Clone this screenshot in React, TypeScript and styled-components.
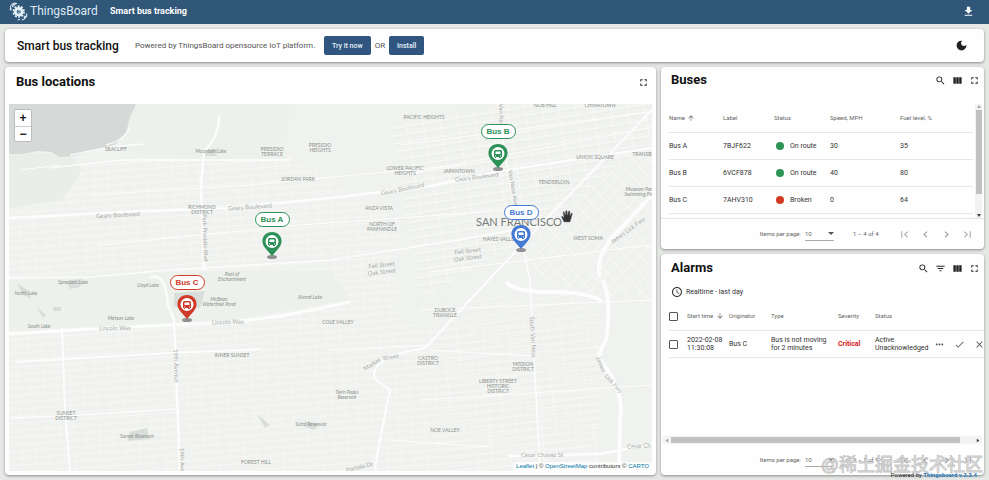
import React from "react";
import styled, { createGlobalStyle, css } from "styled-components";
import {
  MdSearch, MdViewColumn, MdFullscreen, MdFilterList, MdFileDownload, MdFirstPage, MdLastPage,
  MdChevronLeft, MdChevronRight, MdMoreHoriz, MdDone, MdClose, MdSchedule, MdArrowUpward,
  MdArrowDownward, MdDarkMode,
} from "react-icons/md";

const GlobalStyle = createGlobalStyle`
  * { box-sizing: border-box; }
  body { margin: 0; background: #e6e8e6; font-family: Roboto, "Noto Sans CJK SC", sans-serif; color: #222; }
  button, select, input { font: inherit; color: inherit; margin: 0; }
  h1, h2, h3, p { margin: 0; }
`;

const Page = styled.div`
  display: flex;
  flex-direction: column;
  min-height: 100vh;
  overflow: hidden;
`;
const TopBar = styled.header`
  display: flex;
  align-items: center;
  height: 24px;
  padding: 0 14px 2px 9px;
  background: #305678;
  color: #fff;
`;
const Brand = styled.a`
  display: flex;
  align-items: center;
  gap: 2px;
  width: 101px;
  color: #dcebf7;
  font-size: 12px;
  line-height: 16px;
  text-decoration: none;
`;
const PageTitle = styled.h1`
  flex: 1;
  font-size: 9px;
  font-weight: 700;
  line-height: 12px;
`;
const IconButton = styled.button<{ $size?: number; $color?: string }>`
  display: flex;
  align-items: center;
  justify-content: center;
  flex: none;
  width: ${(p) => p.$size ?? 11}px;
  height: ${(p) => p.$size ?? 11}px;
  padding: 0;
  border: 0;
  background: none;
  color: ${(p) => p.$color ?? "#222"};
  font-size: ${(p) => p.$size ?? 11}px;
`;
const Dashboard = styled.main`
  flex: 1;
  display: grid;
  grid-template-columns: minmax(0, 651fr) minmax(0, 323fr);
  grid-template-rows: auto 1fr;
  gap: 5px;
  padding: 5px;
`;
const card = css`
  background: #fefefe;
  border-radius: 4px;
  box-shadow: 0 1px 3px rgba(0, 0, 0, 0.4);
`;
const Intro = styled.section`
  ${card}
  grid-column: 1 / -1;
  display: flex;
  align-items: center;
  height: 33px;
  padding: 0 16px 0 12px;
`;
const IntroTitle = styled.h2`
  min-width: 118px;
  font-size: 12px;
  font-weight: 500;
  line-height: 16px;
  color: #111;
`;
const IntroText = styled.p<{ $min?: number }>`
  min-width: ${(p) => p.$min ?? 0}px;
  font-size: 8px;
  line-height: 12px;
  color: #555;
`;
const ActionButton = styled.button`
  height: 19px;
  margin: 0 4px;
  padding: 0 8px;
  border: 0;
  border-radius: 2px;
  background: #305680;
  color: #e8f1f8;
  font-size: 7px;
  font-weight: 500;
`;
const Grow = styled.div`
  flex: 1;
`;
const MapCard = styled.section`
  ${card}
  display: flex;
  flex-direction: column;
  padding: 0 4px 4px;
`;
const RightColumn = styled.div`
  display: flex;
  flex-direction: column;
  gap: 5px;
  min-width: 0;
`;
const Panel = styled.section<{ $grow?: boolean }>`
  ${card}
  display: flex;
  flex-direction: column;
  flex: ${(p) => (p.$grow ? "1" : "none")};
  overflow: hidden;
`;
const PanelHead = styled.div<{ $height: number; $pad: string }>`
  display: flex;
  align-items: center;
  gap: 6px;
  flex: none;
  height: ${(p) => p.$height}px;
  padding: ${(p) => p.$pad};
`;
const PanelTitle = styled.h2`
  flex: 1;
  font-size: 13px;
  font-weight: 700;
  line-height: 16px;
  color: #111;
`;
const MapArea = styled.div`
  position: relative;
  flex: 1;
  min-height: 367px;
  overflow: hidden;
  background: #f0f2ef;
`;
const MapDrawing = styled.svg`
  position: absolute;
  inset: 0;
  width: 100%;
  height: 100%;
`;
const ZoomBox = styled.div`
  position: absolute;
  left: 5px;
  top: 5px;
  width: 18px;
  border: 1px solid #bbbdbb;
  border-radius: 2px;
  background: #fff;
`;
const ZoomButton = styled.button`
  display: block;
  width: 16px;
  height: 16px;
  padding: 0;
  border: 0;
  background: none;
  color: #111;
  font: 700 12px/16px "Liberation Sans", sans-serif;
  & + & { height: 15px; border-top: 1px solid #ccc; line-height: 14px; }
`;
const Marker = styled.div<{ $x: number; $y: number; $color: string }>`
  position: absolute;
  left: ${(p) => p.$x}px;
  top: ${(p) => p.$y}px;
  width: 36px;
  display: flex;
  flex-direction: column;
  align-items: center;
  gap: 4px;
  color: ${(p) => p.$color};
`;
const MarkerLabel = styled.span`
  width: 35px;
  height: 15px;
  border: 1px solid currentColor;
  border-radius: 8px;
  background: #fff;
  text-align: center;
  font: 700 8px/13px "Liberation Sans", sans-serif;
`;
const Attribution = styled.div`
  position: absolute;
  right: 0;
  bottom: 0;
  padding: 0 3px;
  background: rgba(255, 255, 255, 0.7);
  font: 6px/9px "Liberation Sans", sans-serif;
  color: #333;
  a { color: #0078a8; text-decoration: none; }
`;
const HandCursor = styled.svg`
  position: absolute;
  left: 552px;
  top: 106px;
`;
const TableArea = styled.div<{ $grow?: boolean }>`
  display: flex;
  flex: ${(p) => (p.$grow ? "1" : "none")};
  align-items: stretch;
  min-height: 114px;
  overflow: hidden;
`;
const Table = styled.table`
  flex: 1;
  align-self: flex-start;
  min-width: 0;
  width: 100%;
  margin-left: 8px;
  table-layout: fixed;
  border-collapse: separate;
  border-spacing: 0;
  font-size: 7px;
  line-height: 8px;
  color: #333;
`;
const Th = styled.th<{ $w?: number }>`
  width: ${(p) => (p.$w ? `${p.$w}px` : "auto")};
  height: 29px;
  padding: 0;
  border-bottom: 1px solid #e6e6e6;
  text-align: left;
  font-size: 6px;
  font-weight: 400;
  white-space: nowrap;
  color: #666;
  svg { vertical-align: -2px; margin-left: 1px; }
`;
const Td = styled.td`
  height: 27px;
  padding: 0;
  border-bottom: 1px solid #e6e6e6;
`;
const StatusCell = styled.span<{ $color: string }>`
  display: flex;
  align-items: center;
  gap: 6px;
  padding-left: 2px;
  &::before {
    content: "";
    width: 8px;
    height: 8px;
    border-radius: 50%;
    background: ${(p) => p.$color};
  }
`;
const Critical = styled.strong`
  color: #d92020;
`;
const Nowrap = styled.span`
  white-space: nowrap;
`;
const Actions = styled.div`
  display: flex;
  gap: 9px;
`;
const ScrollTrack = styled.div<{ $horizontal?: boolean }>`
  display: flex;
  flex-direction: ${(p) => (p.$horizontal ? "row" : "column")};
  align-items: center;
  flex: none;
  gap: 2px;
  ${(p) => (p.$horizontal
    ? "height: 8px; margin: 0 2px; padding: 0 2px;"
    : "width: 7px; margin: 0 2px; padding: 1px 0;")}
  background: #f3f3f3;
`;
const ScrollThumb = styled.div<{ $share: number; $horizontal?: boolean }>`
  flex: ${(p) => p.$share};
  background: #c1c1c1;
  ${(p) => (p.$horizontal ? "height: 6px;" : "width: 6px;")}
`;
const ScrollRest = styled.div<{ $share: number }>`
  flex: ${(p) => p.$share};
`;
const Caret = styled.svg<{ $turn?: number }>`
  flex: none;
  width: 4px;
  height: 3px;
  transform: rotate(${(p) => p.$turn ?? 0}deg);
`;
const Paginator = styled.div<{ $line?: boolean }>`
  display: flex;
  align-items: center;
  justify-content: flex-end;
  flex: none;
  height: 31px;
  padding-right: 10px;
  border-top: 1px solid ${(p) => (p.$line ? "#e6e6e6" : "transparent")};
  font-size: 6px;
  line-height: 8px;
  color: #666;
`;
const PageSize = styled.label`
  display: flex;
  align-items: center;
  gap: 4px;
`;
const SelectWrap = styled.span`
  display: flex;
  align-items: center;
  width: 29px;
  height: 14px;
  border-bottom: 1px solid #aaa;
  color: #666;
`;
const Select = styled.select`
  flex: 1;
  min-width: 0;
  padding: 0;
  border: 0;
  appearance: none;
  background: none;
`;
const Range = styled.span`
  width: 45px;
  margin: 0 0 0 19px;
`;
const PageButtons = styled.div`
  display: flex;
  gap: 8px;
`;
const TimeWindow = styled.button`
  display: flex;
  align-items: center;
  gap: 3px;
  align-self: flex-start;
  height: 20px;
  margin-left: 10px;
  padding: 0;
  border: 0;
  background: none;
  font-size: 7px;
  color: #333;
`;
const Checkbox = styled.input`
  display: block;
  appearance: none;
  width: 9px;
  height: 9px;
  border: 1px solid #555;
  border-radius: 1px;
`;
const PoweredBy = styled.footer`
  position: absolute;
  right: 12px;
  bottom: 1px;
  font-size: 6px;
  line-height: 9px;
  color: #222;
  a { color: #2a75b5; font-weight: 700; text-decoration: none; }
`;
const Watermark = styled.div`
  position: absolute;
  right: 6px;
  bottom: 2px;
  font-size: 18px;
  line-height: 26px;
  font-family: "Liberation Sans", "Noto Sans CJK SC", sans-serif;
  white-space: nowrap;
  color: rgba(255, 255, 255, 0.9);
  -webkit-text-stroke: 1px rgba(110, 110, 110, 0.4);
  pointer-events: none;
`;
const Shell = styled.div`
  position: relative;
`;

const Logo = () => (
  <svg width="19" height="19" viewBox="0 0 57 57" fill="none" stroke="#e8f3fa" strokeWidth="3" aria-hidden="true">
    <circle cx="29" cy="29" r="10" strokeWidth="8" />
    <circle cx="29" cy="29" r="16" strokeWidth="5" strokeDasharray="6 4.050" />
    <path d="M26 27l7-2M27 32l6-2" strokeWidth="2" />
    <path d="M5 22V10M11 14l-3-8h10M17 3l7 2M16 11l-6 3M38 54l9-3 1-8M53 34v10l-6 4M33 52l-7 2" />
    <circle cx="16" cy="6" r="3" /><circle cx="5" cy="22" r="2" /><circle cx="48" cy="45" r="3" />
  </svg>
);

const Place = ({ x, y, lines, size = 5 }: { x: number; y: number; lines: string[]; size?: number }) => (
  <text x={x} y={y} fontSize={size} textAnchor="middle" fill="#8a8f8c">
    {lines.map((l, i) => <tspan key={l} x={x} dy={i ? size : 0}>{l}</tspan>)}
  </text>
);

const places: [number, number, string[]][] = [
  [116, 151, ["SEACLIFF"]], [272, 151, ["PRESIDIO", "TERRACE"]], [320, 147, ["PRESIDIO", "HEIGHTS"]],
  [298, 181, ["JORDAN PARK"]], [202, 209, ["RICHMOND", "DISTRICT"]], [424, 119, ["PACIFIC HEIGHTS"]],
  [545, 107, ["NOB HILL"]], [600, 107, ["CHINATOWN"]], [595, 159, ["UNION SQUARE"]], [405, 170, ["LOWER PACIFIC", "HEIGHTS"]],
  [459, 173, ["JAPANTOWN"]], [554, 184, ["TENDERLOIN"]], [379, 210, ["ANZA VISTA"]], [382, 226, ["NORTH OF", "PANHANDLE"]],
  [500, 241, ["HAYES VALLEY"]], [588, 240, ["WEST SOMA"]], [445, 312, ["DUBOCE", "TRIANGLE"]], [338, 324, ["COLE VALLEY"]],
  [428, 360, ["CASTRO", "DISTRICT"]], [523, 366, ["MISSION", "DISTRICT"]], [498, 383, ["LIBERTY STREET", "HISTORIC", "DISTRICT"]],
  [445, 432, ["NOE VALLEY"]], [232, 357, ["INNER SUNSET"]], [66, 415, ["SUNSET", "DISTRICT"]], [256, 464, ["FOREST HILL"]],
  [645, 156, ["TRANSBAY"]],
];
const waters: [number, number, string[]][] = [
  [211, 153, ["Mountain Lake"]], [73, 284, ["Spreckels Lake"]], [26, 295, ["North Lake"]], [148, 287, ["Lloyd Lake"]],
  [232, 276, ["Pool of", "Enchantment"]], [219, 301, ["McBean", "Waterfowl Pond"]], [310, 299, ["Alvord Lake"]],
  [121, 320, ["Metson Lake"]], [39, 328, ["South Lake"]], [137, 438, ["Sunset Reservoir"]], [347, 394, ["Twin Peaks", "Reservoir"]],
  [311, 426, ["Sutro Reservoir"]], [640, 191, ["Museum Park", "Swimming Pool"]],
];
const streets: [number, number, number, string][] = [
  [118, 217, -3, "Geary Boulevard"], [250, 209, -4, "Geary Boulevard"], [403, 191, -11, "Geary Boulevard"], [477, 179, -7, "Geary Boulevard"],
  [115, 330, -1, "Lincoln Way"], [228, 324, -2, "Lincoln Way"], [382, 267, -7, "Fell Street"], [382, 274, -7, "Oak Street"],
  [468, 253, -7, "Fell Street"], [468, 260, -7, "Oak Street"], [542, 457, 0, "Cesar Chavez St"], [639, 448, -4, "Cesar Ch"],
  [203, 238, 88, "Park Presidio Blvd"], [174, 366, 88, "19th Avenue"], [180, 460, 88, "19th Ave"], [511, 188, 80, "Van Ness Ave"],
  [531, 337, 87, "South Van Ness"], [499, 116, 88, "Van Ness"], [373, 366, -32, "Market"], [391, 359, -9, "Street"],
  [599, 365, 68, "James"], [612, 385, 50, "Lick Fwy"], [629, 232, -36, "James Lick Fwy"], [360, 469, -14, "Portola Dr"],
];
const roads: [string, number][] = [
  ["M9 218L120 212L230 208L330 198L430 186L500 171L652 148", 2.4],
  ["M9 278L90 277L170 270L330 260L460 240L540 225", 1.5],
  ["M9 334L110 328L230 322L282 316L350 302", 3],
  ["M15 362L170 353L262 349", 2], ["M10 418L64 416L175 409", 1.5],
  ["M219 115Q220 135 204 152L201 185L204 270", 2.6], ["M150 278Q165 270 168 305L174 320L180 471", 2.4],
  ["M62 328L65 410L70 471", 2], ["M498 104L510 185L530 280L540 471", 1.5],
  ["M375 470L378 450L390 390L374 378Q372 360 405 352L425 348L545 220L652 110", 2],
  ["M506 282Q515 293 560 292Q595 294 602 302M603 280Q612 300 606 340Q597 355 600 360Q625 390 620 420L619 471M600 277Q595 260 610 240L652 195", 4],
  ["M508 456L600 454L652 444", 2.5], ["M330 350L425 345M430 350L530 356M390 440L490 447", 1.2],
  ["M106 145Q122 142 130 128M70 155L110 147L145 144M50 168L120 160L290 160", 1.4],
  ["M20 170L60 165M90 195L250 185L460 165M100 245L300 225L510 210", 1],
  ["M400 175L650 128M400 145L650 112M430 272L650 245M420 310L652 300M420 400L652 385", 1],
];

const BusMap = () => (
  <MapDrawing viewBox="9 104 643 367" preserveAspectRatio="xMinYMin slice" fontFamily="Lato, sans-serif" aria-label="Map of San Francisco">
    <defs>
      <pattern id="avenues" width="13" height="7" patternUnits="userSpaceOnUse" patternTransform="rotate(-4)">
        <path d="M0 3.500H13M4 0V7" stroke="#f6f7f5" strokeWidth="1" /><path d="M0 0H13" stroke="#eceeec" strokeWidth="0.600" />
      </pattern>
      <pattern id="downtown" width="17" height="8" patternUnits="userSpaceOnUse" patternTransform="rotate(-9)">
        <path d="M0 4H17M8 0V8" stroke="#f9faf8" strokeWidth="0.900" /><path d="M0 6H17" stroke="#e8eae7" strokeWidth="0.600" />
      </pattern>
      <pattern id="soma" width="12" height="9" patternUnits="userSpaceOnUse" patternTransform="rotate(-43)">
        <path d="M0 4H12M6 0V9" stroke="#f9faf8" strokeWidth="1" /><path d="M0 5H12" stroke="#e7e9e6" strokeWidth="0.600" />
      </pattern>
    </defs>
    <path fill="#f0f2ef" d="M9 104H652V471H9z" />
    <path fill="url(#avenues)" d="M50 165L290 155L400 220L390 471H9V220zM9 325H600V471H9z" />
    <path fill="url(#downtown)" d="M390 125L500 104H652V140L540 230L420 300z" />
    <path fill="url(#soma)" d="M652 140V300L560 290L520 260L545 225z" />
    <path fill="url(#downtown)" d="M430 300L610 290L600 471H450z" opacity=".6" />
    <path fill="#e9eee8" d="M9 155L40 153L70 155L82 170L62 200L9 208z" />
    <path fill="#edf1ec" d="M132 104H290L285 158L205 160L120 151zM9 280L150 272L330 270L350 300L230 320L9 331z" />
    <path fill="#d5dad8" d="M9 104H136L130 117L126 133L116 144L106 148L94 150L84 153L72 156L60 157L51 152L38 151L22 154L9 154z" />
    <g fill="#dadedb"><path d="M174 293L205 291L200 308L174 307zM17 283L29 291L31 299L22 294zM36 306L46 315L43 318zM53 307h8v4h-8zM66 281L82 279L80 287L70 289zM130 432L147 428L149 439L127 441zM257 414L270 425L265 428zM305 421L320 424L314 430L305 427zM205 150L219 148L216 156L205 156z" /></g>
    <g fill="none" stroke="#fff" strokeLinejoin="round" opacity=".85">{roads.map(([d, w]) => <path key={d} d={d} strokeWidth={w} />)}</g>
    {places.map(([x, y, l], i) => <Place key={i} x={x} y={y} lines={l} />)}
    <g fontStyle="italic">{waters.map(([x, y, l], i) => <Place key={i} x={x} y={y} lines={l} />)}</g>
    <g fill="#a7aaa8" fontSize="6" textAnchor="middle">
      {streets.map(([x, y, a, t], i) => <text key={i} transform={`translate(${x} ${y}) rotate(${a})`}>{t}</text>)}
    </g>
    <text x="519" y="226" textAnchor="middle" fontSize="11" fill="#777a78">SAN FRANCISCO</text>
  </MapDrawing>
);

const Pin = () => (
  <svg width="24" height="30" viewBox="0 0 24 30" aria-hidden="true">
    <ellipse cx="12" cy="26" rx="5" ry="2" fill="#777" opacity=".8" />
    <path d="M12 25L6 18C-1 11 3 1 12 1S25 11 18 18z" fill="currentColor" />
    <circle cx="12" cy="10.500" r="6.500" fill="#fff" />
    <path fill="currentColor" d="M9 7h6l1 1v6h-1v1h-2v-1h-3v1H9v-1H8V8z" />
    <path fill="#fff" d="M9.500 8.500h5v2.500h-5zM9 12.500h1v1H9zM14 12.500h1v1h-1z" />
  </svg>
);

const markers = [
  { name: "Bus A", x: 245, y: 108, color: "#2b9157" },
  { name: "Bus B", x: 471, y: 20, color: "#2b9157" },
  { name: "Bus C", x: 160, y: 171, color: "#d03a28" },
  { name: "Bus D", x: 494, y: 101, color: "#4679d4" },
];
const buses = [
  ["Bus A", "7BJF622", "On route", "30", "35"],
  ["Bus B", "6VCF878", "On route", "40", "80"],
  ["Bus C", "7AHV310", "Broken", "0", "64"],
];

const Down = ({ turn, color = "#444" }: { turn?: number; color?: string }) => (
  <Caret $turn={turn} viewBox="0 0 4 3" aria-hidden="true"><path d="M0 0h4L2 3z" fill={color} /></Caret>
);

const Pager = ({ id, range, line }: { id: string; range: string; line?: boolean }) => (
  <Paginator $line={line}>
    <PageSize htmlFor={id}>
      Items per page:
      <SelectWrap>
        <Select id={id} defaultValue="10"><option>10</option><option>20</option></Select>
        <svg width="6" height="3" viewBox="0 0 6 3" aria-hidden="true"><path d="M0 0h6L3 3z" fill="#555" /></svg>
      </SelectWrap>
    </PageSize>
    <Range>{range}</Range>
    <PageButtons>
      <IconButton $size={13} $color="#aaa" aria-label="First page"><MdFirstPage /></IconButton>
      <IconButton $size={13} $color="#999" aria-label="Previous page"><MdChevronLeft /></IconButton>
      <IconButton $size={13} $color="#999" aria-label="Next page"><MdChevronRight /></IconButton>
      <IconButton $size={13} $color="#aaa" aria-label="Last page"><MdLastPage /></IconButton>
    </PageButtons>
  </Paginator>
);

export default function App() {
  return (
    <Shell>
      <GlobalStyle />
      <Page>
        <TopBar>
          <Brand href="#"><Logo />ThingsBoard</Brand>
          <PageTitle>Smart bus tracking</PageTitle>
          <IconButton $size={13} $color="#fff" aria-label="Download"><MdFileDownload /></IconButton>
        </TopBar>
        <Dashboard>
          <Intro>
            <IntroTitle>Smart bus tracking</IntroTitle>
            <IntroText $min={185}>Powered by ThingsBoard opensource IoT platform.</IntroText>
            <ActionButton>Try it now</ActionButton>
            <IntroText>OR</IntroText>
            <ActionButton>Install</ActionButton>
            <Grow />
            <IconButton $size={13} aria-label="Dark mode"><MdDarkMode /></IconButton>
          </Intro>
          <MapCard>
            <PanelHead $height={37} $pad="0 3px 7px 7px">
              <PanelTitle>Bus locations</PanelTitle>
              <IconButton aria-label="Fullscreen map"><MdFullscreen /></IconButton>
            </PanelHead>
            <MapArea>
              <BusMap />
              {markers.map((m) => (
                <Marker key={m.name} $x={m.x} $y={m.y} $color={m.color}>
                  <MarkerLabel>{m.name}</MarkerLabel>
                  <Pin />
                </Marker>
              ))}
              <HandCursor width="12" height="13" viewBox="0 0 12 13" aria-hidden="true">
                <path fill="#333" stroke="#888" strokeWidth=".5" d="M3 12L0.500 7L1 6L3 7.500L2 2L3 1.500L4.500 5V1L6 .5L6.500 5L7.500 1H9V5.500L10.500 3L11.500 3.500L10 9L9 12z" />
              </HandCursor>
              <ZoomBox>
                <ZoomButton aria-label="Zoom in">+</ZoomButton>
                <ZoomButton aria-label="Zoom out">−</ZoomButton>
              </ZoomBox>
              <Attribution>
                <a href="#leaflet">Leaflet</a> | © <a href="#osm">OpenStreetMap</a> contributors © <a href="#carto">CARTO</a>
              </Attribution>
            </MapArea>
          </MapCard>
          <RightColumn>
            <Panel>
              <PanelHead $height={37} $pad="0 4px 11px 10px">
                <PanelTitle>Buses</PanelTitle>
                <IconButton aria-label="Search buses"><MdSearch /></IconButton>
                <IconButton aria-label="Columns"><MdViewColumn /></IconButton>
                <IconButton aria-label="Fullscreen buses"><MdFullscreen /></IconButton>
              </PanelHead>
              <TableArea>
                <Table>
                  <thead>
                    <tr>
                      <Th $w={54}>Name <MdArrowUpward size={8} /></Th><Th $w={51}>Label</Th><Th $w={56}>Status</Th>
                      <Th $w={70}>Speed, MPH</Th><Th>Fuel level, %</Th>
                    </tr>
                  </thead>
                  <tbody>
                    {buses.map(([name, label, status, speed, fuel]) => (
                      <tr key={name}>
                        <Td>{name}</Td><Td>{label}</Td>
                        <Td><StatusCell $color={status === "Broken" ? "#d23c22" : "#2e9455"}>{status}</StatusCell></Td>
                        <Td>{speed}</Td><Td>{fuel}</Td>
                      </tr>
                    ))}
                  </tbody>
                </Table>
                <ScrollTrack>
                  <Down turn={180} color="#aaa" /><ScrollThumb $share={84} /><ScrollRest $share={16} /><Down />
                </ScrollTrack>
              </TableArea>
              <Pager id="bus-size" range="1 – 4 of 4" line />
            </Panel>
            <Panel $grow>
              <PanelHead $height={28} $pad="0 4px 0 10px">
                <PanelTitle>Alarms</PanelTitle>
                <IconButton aria-label="Search alarms"><MdSearch /></IconButton>
                <IconButton aria-label="Filter"><MdFilterList /></IconButton>
                <IconButton aria-label="Alarm columns"><MdViewColumn /></IconButton>
                <IconButton aria-label="Fullscreen alarms"><MdFullscreen /></IconButton>
              </PanelHead>
              <TimeWindow><MdSchedule size={12} />Realtime - last day</TimeWindow>
              <TableArea $grow>
                <Table>
                  <thead>
                    <tr>
                      <Th $w={18}><Checkbox type="checkbox" aria-label="Select all alarms" /></Th>
                      <Th $w={42}>Start time <MdArrowDownward size={8} /></Th><Th $w={42}>Originator</Th><Th $w={67}>Type</Th>
                      <Th $w={37}>Severity</Th><Th $w={59}>Status</Th><Th />
                    </tr>
                  </thead>
                  <tbody>
                    <tr>
                      <Td><Checkbox type="checkbox" aria-label="Select alarm" /></Td>
                      <Td><Nowrap>2022-02-08<br />11:30:08</Nowrap></Td><Td>Bus C</Td>
                      <Td>Bus is not moving<br />for 2 minutes</Td>
                      <Td><Critical>Critical</Critical></Td><Td>Active<br />Unacknowledged</Td>
                      <Td>
                        <Actions>
                          <IconButton $color="#555" aria-label="Details"><MdMoreHoriz /></IconButton>
                          <IconButton $color="#666" aria-label="Acknowledge"><MdDone /></IconButton>
                          <IconButton $color="#666" aria-label="Clear"><MdClose /></IconButton>
                        </Actions>
                      </Td>
                    </tr>
                  </tbody>
                </Table>
              </TableArea>
              <ScrollTrack $horizontal>
                <Down turn={90} color="#999" /><ScrollThumb $horizontal $share={290} /><ScrollRest $share={12} /><Down turn={-90} />
              </ScrollTrack>
              <Pager id="alarm-size" range="1 – 1 of 1" />
            </Panel>
          </RightColumn>
        </Dashboard>
      </Page>
      <PoweredBy>Powered by <a href="#thingsboard">Thingsboard v.3.3.4</a></PoweredBy>
      <Watermark>@稀土掘金技术社区</Watermark>
    </Shell>
  );
}
